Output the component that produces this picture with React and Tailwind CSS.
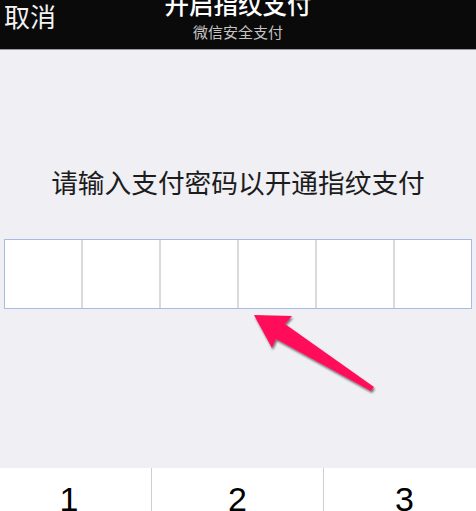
export default function App() {
  const cells = [0, 1, 2, 3, 4, 5];
  const keys = [
    { label: "1", cls: "w-[151px] pr-[13px]" },
    { label: "2", cls: "w-[172px] border-l border-[#cfcfcf]" },
    { label: "3", cls: "flex-1 pl-[9px] border-l border-[#cfcfcf]" },
  ];

  return (
    <div
      className="relative w-[476px] h-[511px] overflow-hidden bg-[#efeff4]"
      style={{ fontFamily: '"Noto Sans CJK SC", "Liberation Sans", sans-serif' }}
    >
      {/* nav bar */}
      <div className="h-[50px] bg-[#0a0a0a] border-b border-[#9a9a9a] grid grid-cols-[1fr_auto_1fr]">
        <div className="pl-[4px] text-[26px] leading-[32px] text-[#f2f2f2]">取消</div>
        <div className="flex flex-col items-center -mt-[11px]">
          <div className="text-[24.5px] leading-[30px] text-white font-medium">开启指纹支付</div>
          <div className="text-[15px] leading-[20px] text-[#c4c4c4] mt-[3px]">微信安全支付</div>
        </div>
        <div />
      </div>

      <div className="pt-[116px] text-center text-[26.7px] leading-[32px] text-[#1c1c1c]">
        请输入支付密码以开通指纹支付
      </div>

      <div className="mt-[41px] mx-[4px] h-[70px] flex bg-white border border-[#a8bbe6]">
        {cells.map((c) => (
          <div
            key={c}
            className={c === 0 ? "flex-1" : "flex-1 border-l-2 border-[#dadada]"}
          />
        ))}
      </div>

      <div className="mt-[159px] h-[60px] bg-white flex">
        {keys.map((k) => (
          <div
            key={k.label}
            className={k.cls + " flex justify-center pt-[11px] text-[34px] leading-[40px] text-black"}
            style={{ fontFamily: '"Liberation Sans", Arial, sans-serif' }}
          >
            {k.label}
          </div>
        ))}
      </div>

      {/* annotation arrow */}
      <svg
        className="absolute left-0 top-0 pointer-events-none"
        width="476"
        height="511"
        viewBox="0 0 476 511"
      >
        <defs>
          <filter id="sh" x="-20%" y="-20%" width="140%" height="140%">
            <feDropShadow dx="1" dy="2" stdDeviation="1.2" floodColor="#000" floodOpacity="0.55" />
          </filter>
        </defs>
        <polygon
          points="254,315 292,316 285,324 374,387 371,391 276,339 272,348"
          fill="#ff0f5a"
          filter="url(#sh)"
        />
      </svg>
    </div>
  );
}
